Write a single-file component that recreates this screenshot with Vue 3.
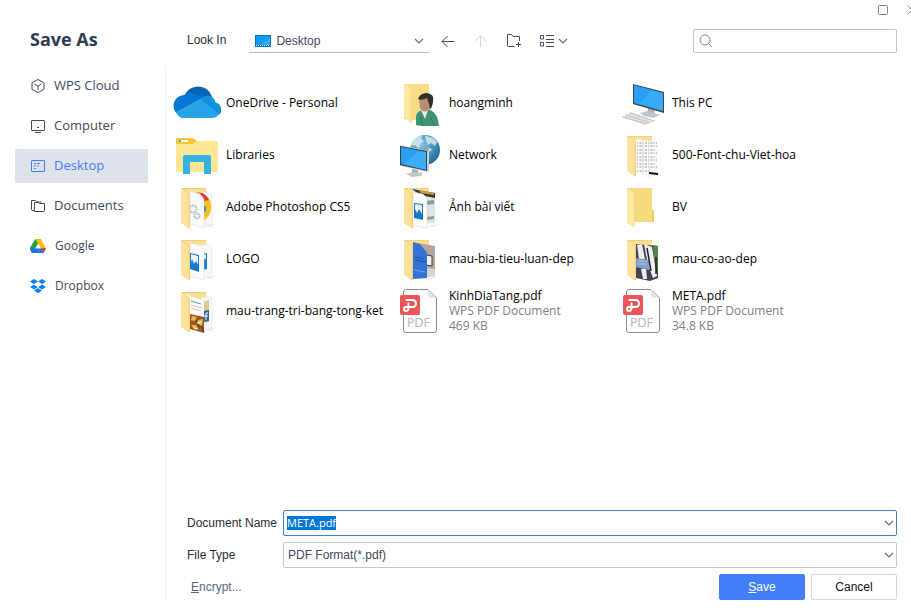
<script setup>
import { ref, onMounted } from 'vue'

const places = [
  { id: 'cloud', label: 'WPS Cloud' },
  { id: 'computer', label: 'Computer' },
  { id: 'desktop', label: 'Desktop' },
  { id: 'documents', label: 'Documents' },
  { id: 'google', label: 'Google', service: true },
  { id: 'dropbox', label: 'Dropbox', service: true },
]
const activePlace = ref('desktop')

const files = [
  { name: 'OneDrive - Personal', icon: 'onedrive' },
  { name: 'hoangminh', icon: 'user' },
  { name: 'This PC', icon: 'pc' },
  { name: 'Libraries', icon: 'libraries' },
  { name: 'Network', icon: 'network' },
  { name: '500-Font-chu-Viet-hoa', icon: 'folder', preview: 'fonts' },
  { name: 'Adobe Photoshop CS5', icon: 'folder', preview: 'setup' },
  { name: 'Ảnh bài viết', icon: 'folder', preview: 'photo' },
  { name: 'BV', icon: 'plain' },
  { name: 'LOGO', icon: 'folder', preview: 'images' },
  { name: 'mau-bia-tieu-luan-dep', icon: 'folder', preview: 'cover' },
  { name: 'mau-co-ao-dep', icon: 'folder', preview: 'clothes' },
  { name: 'mau-trang-tri-bang-tong-ket', icon: 'folder', preview: 'decor' },
  { name: 'KinhDiaTang.pdf', icon: 'pdf', type: 'WPS PDF Document', size: '469 KB' },
  { name: 'META.pdf', icon: 'pdf', type: 'WPS PDF Document', size: '34.8 KB' },
]

const fileName = ref('META.pdf')
const nameInput = ref(null)

onMounted(() => {
  nameInput.value.focus()
  nameInput.value.select()
})
</script>

<template>
  <div class="dialog">
    <svg class="defs" width="0" height="0" aria-hidden="true">
      <defs>
        <linearGradient id="flap" x1="0" x2="1" y1="0" y2="0">
          <stop offset="0" stop-color="#fbe3a0" />
          <stop offset=".8" stop-color="#fde09a" />
          <stop offset="1" stop-color="#f0cb74" />
        </linearGradient>
        <radialGradient id="globe" cx=".35" cy=".3" r=".8">
          <stop offset="0" stop-color="#8fc7e0" />
          <stop offset=".6" stop-color="#408db4" />
          <stop offset="1" stop-color="#21658d" />
        </radialGradient>
      </defs>
    </svg>

    <aside class="sidebar">
      <h1>Save As</h1>
      <nav aria-label="Places">
        <button
          v-for="p in places"
          :key="p.id"
          type="button"
          class="place"
          :class="{ active: p.id === activePlace, service: p.service }"
          @click="activePlace = p.id"
        >
          <svg v-if="p.id === 'cloud'" viewBox="0 0 16 16" class="line">
            <path d="M8 1.5 14 4.7V11.3L8 14.5 2 11.3V4.7Z" stroke-linejoin="round" />
            <path d="M4.5 6 8 8.2 11.5 6M8 8.2V12" />
          </svg>
          <svg v-else-if="p.id === 'computer'" viewBox="0 0 16 16" class="line">
            <rect x="1.5" y="2.5" width="13" height="10" rx="0.5" />
            <path d="M5 14.5H11M7 9.5H9" />
          </svg>
          <svg v-else-if="p.id === 'desktop'" viewBox="0 0 16 16" class="line">
            <rect x="1.5" y="2.5" width="13" height="11" rx="0.5" />
            <path d="M4 5.5H6M7 5.5H10M4 8H6M7 8H9M4 10.5H6" />
          </svg>
          <svg v-else-if="p.id === 'documents'" viewBox="0 0 16 16" class="line">
            <path d="M4.500 12.500H2.5Q1.5 12.500 1.5 11.5V2.5H5.5L7 4H11.5" />
            <path d="M4.500 13.500V4.500H8L9.500 5.500H14.500V12.500Q14.500 13.500 13.500 13.500Z" />
          </svg>
          <svg v-else-if="p.id === 'google'" viewBox="0 0 16 16">
            <path d="M5.3 1H10.7L5.3 10.3H0Z" fill="#34a853" />
            <path d="M5.3 1 0 10.3 2.6 15 8 5.7Z" fill="#259b45" />
            <path d="M5.3 1H10.7L16 10.3H10.7Z" fill="#fbbc05" />
            <path d="M5.3 10.3H10.6L8 15H2.6Q1.8 15 1.4 14.2L0 11.6Q-.2 10.8 0 10.3Z" fill="#1a73e8" />
            <path d="M10.6 10.3H16L14.1 14.1Q13.6 15 12.8 15H8Z" fill="#1a73e8" />
            <path d="M10.6 10.3H16L14 14.2Z" fill="#ea4335" />
            <path d="M8 5.7 10.6 10.3H5.3Z" fill="#fff" />
          </svg>
          <svg v-else viewBox="0 0 16 16">
            <g fill="#1282ee">
              <path d="M4 1 8 3.6 4 6.2 0 3.6ZM12 1 16 3.6 12 6.2 8 3.6Z" />
              <path d="M4 6.4 8 9 4 11.5 0 9ZM12 6.4 16 9 12 11.5 8 9Z" />
              <path d="M8 10.1 12 12.6 8 15.2 4 12.6Z" />
            </g>
            <path d="M8 3.6 12 6.3 8 9 4 6.3Z" fill="#fff" />
          </svg>
          <span>{{ p.label }}</span>
        </button>
      </nav>
    </aside>

    <div class="main">
      <div class="window-controls">
        <button type="button" aria-label="Maximize">
          <svg width="12" height="12" viewBox="0 0 12 12"><rect x="1.5" y="1.5" width="9" height="9" rx="1" /></svg>
        </button>
        <button type="button" aria-label="Close">
          <svg width="4" height="12" viewBox="0 0 4 12"><path d="M0.5 1.5 5 6 0.5 10.5" /></svg>
        </button>
      </div>

      <header class="toolbar">
        <label for="look-in">Look In</label>
        <div class="look-in">
          <svg width="16" height="12" viewBox="0 0 16 12">
            <rect width="16" height="12" fill="#0873b8" />
            <rect x="1" y="1" width="14" height="9" fill="#109bf5" />
            <path d="M6 10 15 3V10Z" fill="#2badff" />
            <path d="M1 10.5H15" stroke="#c9ecff" stroke-dasharray="1 1" />
          </svg>
          <select id="look-in"><option>Desktop</option></select>
          <svg class="chevron" viewBox="0 0 10 6"><path d="M1 1 5 5 9 1" /></svg>
        </div>
        <div class="tools">
          <button type="button" aria-label="Back">
            <svg width="16" height="16" viewBox="0 0 16 16"><path d="M14.5 8.5H2M7.5 3 2 8.5 7.500 14" /></svg>
          </button>
          <button type="button" aria-label="Up" disabled>
            <svg width="16" height="16" viewBox="0 0 16 16"><path d="M7.5 14V2.5M2 8 7.5 2.5 13 8" /></svg>
          </button>
          <button type="button" aria-label="New folder">
            <svg width="16" height="16" viewBox="0 0 16 16"><path d="M8.5 13.5H2.5Q1.5 13.5 1.5 12.500V1.5H5.500L7 3.5H13.5V8M12.5 9V14M10 11.5H15" /></svg>
          </button>
          <button type="button" aria-label="View">
            <svg width="16" height="16" viewBox="0 0 16 16"><path d="M1.5 2.5H4.5V6H1.5ZM1.5 9.5H4.5V13H1.5ZM7 2.5H15M7 6.5H15M7 9.5H15M7 13.5H15" /></svg>
            <svg class="chevron" viewBox="0 0 10 6"><path d="M1 1 5 5 9 1" /></svg>
          </button>
        </div>
        <div class="search">
          <svg width="14" height="14" viewBox="0 0 14 14"><circle cx="6" cy="6" r="5" /><path d="M9.5 9.5 13 13" /></svg>
          <input type="search" aria-label="Search" />
        </div>
      </header>

      <ul class="files">
        <li v-for="f in files" :key="f.name">
          <button type="button" class="file">
            <svg v-if="f.icon === 'onedrive'" viewBox="0 0 48 48">
              <path d="M11 18C15 5 34 3 39 18L29 24Z" fill="#0762b8" />
              <path d="M7 37C-3 32-1 17 11 16 17 12 23 15 29 19L31 25 7 37Z" fill="#0677d5" />
              <path d="M28 19C35 14 42 18 42 23 49 25 50 33 46 36L25 22Z" fill="#1490e0" />
              <path d="M3 33 27 20 46 35Q44 39 38 39H10Q6 39 3 33Z" fill="#28a5e9" />
            </svg>

            <svg v-else-if="f.icon === 'user'" viewBox="0 0 48 48">
              <path d="M8 5H33V41H16L8 40Z" fill="#f9dc85" />
              <path d="M8 5 16 10V45L8 38Z" fill="#ffe8a1" />
              <path d="M15 10V42" stroke="#e9c669" stroke-width=".6" />
              <path d="M20 46V37Q21 32 27 31H34Q42 34 43 47H30Q23 47 20 46Z" fill="#409474" />
              <path d="M25 31 29 40 32 31Z" fill="#e8eee8" />
              <path d="M23 20Q23 15 29 15 36 15 36 23 36 30 31 32 27 34 24 29Z" fill="#b88d70" />
              <path d="M22 20Q24 14 31 14 39 15 37 23 36 29 34 30L33 25 31 19Q26 22 22 20Z" fill="#30302f" />
              <path d="M34 38 39 47M24 38 27 47" stroke="#27785a" fill="none" />
            </svg>

            <svg v-else-if="f.icon === 'pc'" viewBox="0 0 48 48">
              <path d="M29 29 36 31 35 36 29 34Z" fill="#a8b2ba" />
              <path d="M21 34 29 32 41 36 34 39 25 37Z" fill="#bdc5cb" />
              <path d="M14 5 45 13V34L14 25Z" fill="#3a454d" />
              <path d="M15 6 44 14V32L15 24Z" fill="#279ff4" />
              <path d="M33 11 44 14V32L20 25Z" fill="#47b6fb" opacity=".5" />
              <path d="M2 38 12 33 37 42 26 46Z" fill="#e2e4e6" />
              <path d="M4 38 28 45M7 36 31 43.500M11 34 35 42" stroke="#9fa6ab" stroke-width=".8" stroke-dasharray="1.5 .7" fill="none" />
            </svg>

            <svg v-else-if="f.icon === 'libraries'" viewBox="0 0 48 48">
              <path d="M3 10H43Q45 10 45 12V39Q45 41 43 41H5Q3 41 3 39Z" fill="#ffe693" />
              <path d="M3 8Q3 7 4 7H19Q21 7 24 10 21 13 19 13H3Z" fill="#fbc831" />
              <path d="M6 9H15V11H6Z" fill="#fff" />
              <path d="M6 9H8V11H6Z" fill="#35aee4" />
              <path d="M10 43V26Q10 24 12 24H36Q38 24 38 26V43H31V31H17V43Z" fill="#35b1e6" />
            </svg>

            <svg v-else-if="f.icon === 'network'" viewBox="0 0 48 48">
              <circle cx="29" cy="19" r="15" fill="url(#globe)" />
              <path d="M16 10Q20 5 26 5L25 8 28 10 24 13 23 18 19 14 15 15ZM29 4.500 37 7 41 11 39 15 35 12 32 14 30 9ZM31 17 36 18 34 21Z" fill="#d6e8ed" opacity=".85" />
              <path d="M16 38 22 39 22 44 16 42Z" fill="#a6afb5" />
              <path d="M10 43 17 41 27 42 25 45 16 46Z" fill="#c3c8cb" />
              <path d="M4 14 33 20V41L4 35Z" fill="#cad1d6" />
              <path d="M4 15 31 20V40L4 34Z" fill="#34414a" />
              <path d="M5 16 30 21V39L5 33Z" fill="#279ff4" />
              <path d="M23 20 30 21V39L8 33Z" fill="#55bcfa" opacity=".5" />
            </svg>

            <svg v-else-if="f.icon === 'plain'" viewBox="0 0 48 48">
              <path d="M8 5H33V26L35 28V39H12L8 37Z" fill="#f7da7d" />
              <path d="M33 26 35 28V39H33Z" fill="#efcc68" />
              <path d="M8 5 16 11V43Q16 45 14 44L8 40Z" fill="#ffe8a2" />
              <path d="M16 11V38" stroke="#e5c164" stroke-width=".6" />
            </svg>

            <svg v-else-if="f.icon === 'folder'" viewBox="0 0 48 48">
              <path d="M8 5H33V14H12Z" fill="#fadf93" />
              <path d="M30 43 42 41 38 44Z" fill="#ececec" />
              <template v-if="f.preview === 'fonts'">
                <path d="M17 8 39 11V44L30 46 17 43Z" fill="#f8f8f8" />
                <path d="M18 12H38M18 15H38M18 19H37M18 22H38M18 26H37M18 29H38M18 33H37M18 36H38M18 40H30" stroke="#777b80" stroke-width=".8" stroke-dasharray="1 1.5 2 1" />
                <path d="M30 9V46M24 9V44" stroke="#ddd" stroke-width=".7" />
                <path d="M30 41 39 42V44L30 43Z" fill="#111" />
              </template>
              <template v-else-if="f.preview === 'setup'">
                <path d="M26 9H36L39 12V42H28Z" fill="#f7f7f7" stroke="#ddd" stroke-width=".5" />
                <path d="M21 10Q33 7 37 19L29 21Z" fill="#e23a2d" />
                <path d="M37 17Q41 31 30 38L27 29 30 18Z" fill="#fbbd1c" />
                <circle cx="29" cy="26" r="4" fill="#2479d1" />
                <path d="M17 8 27 11 31 16V45L17 41Z" fill="#f8f9fa" stroke="#ddd" stroke-width=".5" />
                <g fill="none" stroke="#b5bdc3" stroke-width="2" stroke-dasharray="1.5 .6">
                  <circle cx="20" cy="26" r="3.5" />
                  <circle cx="24" cy="33" r="2.5" />
                </g>
              </template>
              <template v-else-if="f.preview === 'photo'">
                <path d="M16 6 39 10V39L30 41Z" fill="#dbe6e2" />
                <path d="M16 6 39 10V15L24 12Z" fill="#3b3935" />
                <path d="M23 7 38 10V12L25 10Z" fill="#c4a33c" />
                <path d="M30 18 38 17V21L30 22ZM30 34 38 33V36L30 37Z" fill="#929997" />
                <path d="M17 9 27 11 31 15V45L17 42Z" fill="#fff" stroke="#ccc" stroke-width=".5" />
                <path d="M18 20 27 21V37L18 35Z" fill="#1979cb" />
                <path d="M19 21 26 22V31L23 26 21 30 19 26Z" fill="#e6f4ff" />
              </template>
              <template v-else-if="f.preview === 'images'">
                <path d="M27 10H36L39 13V42H28Z" fill="#f7f7f7" stroke="#ddd" stroke-width=".5" />
                <path d="M29 19 34 18V34L29 35Z" fill="#1979cb" />
                <path d="M30 20 33 19V25L32 23 30 27Z" fill="#e6f4ff" />
                <path d="M17 8 26 10 31 15V45L17 41Z" fill="#fbfbfb" stroke="#d8d8d8" stroke-width=".5" />
                <path d="M17 18 26 20V37L17 34Z" fill="#1979cb" />
                <path d="M18 19 25 21V30L23 26 21 29 19 24 18 27Z" fill="#e6f4ff" />
              </template>
              <template v-else-if="f.preview === 'cover'">
                <path d="M22 8 39 11V41L28 42Z" fill="#b3a79d" />
                <path d="M30 20 36 21V31L30 30Z" fill="#f2f2ef" stroke="#3b3c40" />
                <path d="M27 33 39 34V41L29 42Z" fill="#d8d6d2" />
                <path d="M17 7 24 9 31 18V43L17 44Z" fill="#3272d6" />
                <path d="M19 22 27 24M19 25 30 27" stroke="#20509f" />
                <path d="M18 35 29 37" stroke="#5fb0ec" />
              </template>
              <template v-else-if="f.preview === 'clothes'">
                <path d="M17 9 39 11V43L31 46 17 43Z" fill="#44444c" />
                <path d="M25 9 33 12 38 41 34 43 29 30Z" fill="#f0f0f0" />
                <path d="M34 10 39 11V36L35 24Z" fill="#568347" />
                <path d="M18 10 23 9 26 24 20 24ZM22 34 27 33 28 44 24 44Z" fill="#e8edf4" />
                <path d="M17 23 30 25V35L17 32Z" fill="#7f9dcb" />
                <path d="M28 13 32 36M37 22V39" stroke="#202126" stroke-width="1.5" />
                <path d="M19 26H28M19 29H28" stroke="#c5d7ef" stroke-width=".7" />
              </template>
              <template v-else>
                <path d="M28 10H39V42H30Z" fill="#f7f7f7" stroke="#ddd" stroke-width=".5" />
                <path d="M29 15 36 13V35L29 36Z" fill="#e0c790" />
                <path d="M30 24 36 23V34L30 35Z" fill="#2e65a3" />
                <path d="M35 26H33V33M31 29H35" stroke="#fff" fill="none" />
                <path d="M13 7 31 14V45L17 42Z" fill="#fafafa" />
                <path d="M18 14 28 17" stroke="#49ae82" />
                <path d="M18 18 29 21M18 21 28 24" stroke="#aaa" stroke-width=".7" />
                <path d="M17 27 31 30V46L17 42Z" fill="#9b5721" />
                <path d="M19 29 24 30 22 34 18 33ZM25 33 30 32 29 39 24 37ZM18 38 23 38 26 43 20 41Z" fill="#e8b348" />
                <path d="M23 33 26 40M28 39 31 45" stroke="#49501d" stroke-width="1.5" />
                <path d="M24 36 28 35M21 41 24 42" stroke="#f5ead6" stroke-width="1.5" />
              </template>
              <path d="M8 5 13 7 17 12V45Q17 46 15 45L8 40Z" fill="url(#flap)" />
              <path d="M8 5.500H33M10 6 16 11" stroke="#eccb75" fill="none" stroke-width=".8" />
            </svg>

            <svg v-else viewBox="0 0 48 48">
              <path d="M10 2.5H32L40.5 11V43Q40.5 45.5 38 45.5H10Q7.5 45.5 7.5 43V5Q7.5 2.5 10 2.5Z" fill="#fff" stroke="#8d8d8d" />
              <path d="M32 3V8Q32 11 35 11H40Z" fill="#e4e4e4" />
              <rect x="4" y="8" width="20" height="20" rx="2" fill="#ea5558" />
              <path d="M10.500 13H16Q20 13 20 16.500T16 20H10Q8 20 8 22T10 24 12.500 21.500V16.500" fill="none" stroke="#fff" stroke-width="2" stroke-linecap="round" />
              <text x="11" y="40" class="pdf-mark">PDF</text>
            </svg>

            <span class="caption">
              <span>{{ f.name }}</span>
              <small v-if="f.type">{{ f.type }}</small>
              <small v-if="f.size">{{ f.size }}</small>
            </span>
          </button>
        </li>
      </ul>

      <form class="save-form" @submit.prevent>
        <label for="doc-name">Document Name</label>
        <div class="combo focused">
          <input id="doc-name" ref="nameInput" v-model="fileName" type="text" autocomplete="off" spellcheck="false" />
          <svg class="chevron" viewBox="0 0 10 6"><path d="M1 1 5 5 9 1" /></svg>
        </div>
        <label for="file-type">File Type</label>
        <div class="combo">
          <select id="file-type"><option>PDF Format(*.pdf)</option></select>
          <svg class="chevron" viewBox="0 0 10 6"><path d="M1 1 5 5 9 1" /></svg>
        </div>
        <div class="actions">
          <a href="#"><u>E</u>ncrypt...</a>
          <button type="submit" class="primary"><u>S</u>ave</button>
          <button type="button">Cancel</button>
        </div>
      </form>
    </div>
  </div>
</template>

<style>
body {
  margin: 0;
  background: #fff;
}
</style>

<style scoped>
.dialog {
  box-sizing: border-box;
  display: grid;
  grid-template-columns: 166px minmax(0, 1fr);
  min-height: 100vh;
  padding-bottom: 8px;
  color: #2b2f36;
  font: 12px/16px "Liberation Sans", Arial, sans-serif;
}
.defs {
  position: absolute;
}
button,
input,
select {
  box-sizing: border-box;
  margin: 0;
  padding: 0;
  border: 0;
  background: none;
  color: inherit;
  font: inherit;
}
svg {
  display: block;
  flex: none;
}

.sidebar {
  display: flex;
  flex-direction: column;
}
h1 {
  margin: 0;
  padding: 27px 0 16px 30px;
  color: #2f3b52;
  font: bold 18px/24px "Open Sans", "Noto Sans", sans-serif;
}
nav {
  flex: 1;
  display: flex;
  flex-direction: column;
  gap: 6px;
  padding: 2px 17px 0 15px;
  border-right: 1px solid #f0f1f3;
}
.place {
  display: flex;
  align-items: center;
  gap: 8px;
  height: 34px;
  padding-left: 15px;
  border-radius: 2px;
  color: #414a60;
  font: 13px/18px "Open Sans", "Noto Sans", sans-serif;
  text-align: left;
}
.place svg {
  width: 16px;
  height: 16px;
}
.place span {
  padding-bottom: 2px;
}
.place.service {
  font-size: 12px;
  gap: 9px;
}
.place.service span {
  padding-bottom: 0;
}
.place.active {
  background: #dee2e9;
  color: #417ff9;
}
.line {
  fill: none;
  stroke: currentColor;
}

.main {
  display: flex;
  flex-direction: column;
}
.window-controls {
  display: flex;
  justify-content: flex-end;
  gap: 18px;
  height: 28px;
  padding-top: 4px;
  box-sizing: border-box;
}
.window-controls button {
  height: 12px;
}
.window-controls svg {
  fill: none;
  stroke: #7d859b;
}

.toolbar {
  display: flex;
  align-items: center;
  padding: 0 14px 0 21px;
}
.toolbar label {
  padding-bottom: 2px;
}
.look-in {
  display: flex;
  align-items: center;
  gap: 5px;
  width: 180px;
  height: 25px;
  margin-left: 23px;
  padding: 1px 5px 0 6px;
  box-sizing: border-box;
  border-bottom: 1px solid #b9bcc2;
}
select {
  flex: 1;
  min-width: 0;
  appearance: none;
  outline: none;
  color: #414a60;
}
.chevron {
  width: 10px;
  height: 6px;
  fill: none;
  stroke: #68718a;
  stroke-width: 1.2;
}
.tools {
  display: flex;
  gap: 17px;
  margin-left: 11px;
}
.tools button {
  display: flex;
  align-items: center;
  gap: 3px;
  fill: none;
  stroke: #414a60;
}
.tools button:disabled {
  stroke: #d3d6dc;
}
.search {
  display: flex;
  align-items: center;
  gap: 6px;
  width: 204px;
  height: 24px;
  margin-left: auto;
  padding: 0 5px;
  box-sizing: border-box;
  border: 1px solid #bfc2c9;
  border-radius: 2px;
}
.search svg {
  fill: none;
  stroke: #7d859b;
}
.search input {
  flex: 1;
  min-width: 0;
  outline: none;
}

.files {
  flex: 1;
  display: grid;
  grid-template-columns: repeat(auto-fill, 223px);
  align-content: start;
  gap: 4px 0;
  margin: 0;
  padding: 26px 7px;
  list-style: none;
}
.file {
  display: flex;
  align-items: center;
  gap: 5px;
  width: 100%;
  color: #000;
  font: 12px/15px "Open Sans", "Noto Sans", sans-serif;
  text-align: left;
  white-space: nowrap;
}
.file svg {
  width: 48px;
  height: 48px;
}
.caption {
  display: flex;
  flex-direction: column;
  padding-bottom: 2px;
}
.caption small {
  color: #7f7f7f;
  font-size: 12px;
}
.pdf-mark {
  fill: #b9b9b9;
  font: 12px "DejaVu Sans", sans-serif;
}

.save-form {
  display: grid;
  grid-template-columns: 96px minmax(0, 1fr);
  align-items: center;
  row-gap: 6px;
  padding: 0 14px 0 21px;
}
.combo {
  display: flex;
  align-items: center;
  height: 26px;
  padding: 0 2px 0 3px;
  box-sizing: border-box;
  border: 1px solid #c4c7cc;
  border-radius: 2px;
}
.combo select {
  padding-left: 1px;
}
.combo.focused {
  border-color: #4a7bc8;
}
.combo input {
  flex: 1;
  min-width: 0;
  outline: none;
  font: 11px/14px "Open Sans", "Noto Sans", sans-serif;
}
.combo input::selection {
  background: #0078d7;
  color: #fff;
}
.actions {
  grid-column: 1 / -1;
  display: flex;
  align-items: center;
  gap: 6px;
}
.actions a {
  margin: 0 auto 0 4px;
  color: #5a6784;
  text-decoration: none;
}
.actions button {
  width: 86px;
  height: 26px;
  border: 1px solid #d5d8dd;
  border-radius: 2px;
  color: #111;
}
.actions .primary {
  border-color: #417ff9;
  background: #417ff9;
  color: #fff;
}
</style>
